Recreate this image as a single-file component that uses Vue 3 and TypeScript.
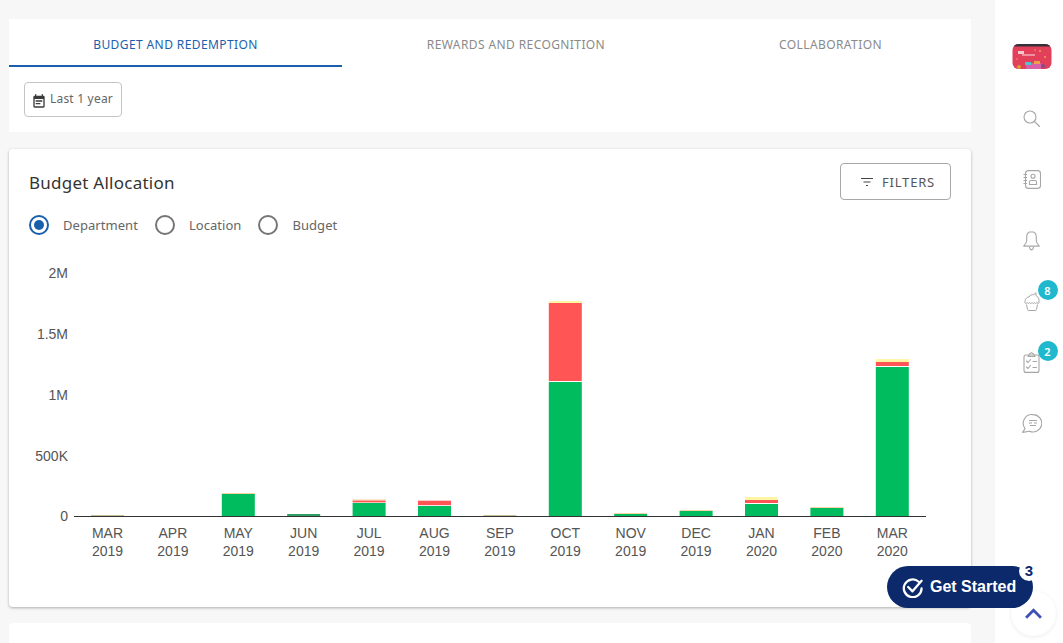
<script setup lang="ts">
type Segment = { color: string; height: number };
type Month = { label: string; year: string; segments: Segment[] };

const green = "#00bc5e";
const red = "#ff5555";
const yellow = "#fdf6a5";
const peach = "#f6d3a3";
const baseline = 266;

const months: Month[] = [
  { label: "MAR", year: "2019", segments: [{ color: "#c9bd94", height: 1 }] },
  { label: "APR", year: "2019", segments: [] },
  { label: "MAY", year: "2019", segments: [{ color: green, height: 22 }, { color: peach, height: 1 }] },
  { label: "JUN", year: "2019", segments: [{ color: "#2f9e63", height: 2 }] },
  { label: "JUL", year: "2019", segments: [{ color: green, height: 13 }, { color: "#ffffff", height: 0.6 }, { color: red, height: 2 }, { color: peach, height: 1 }] },
  { label: "AUG", year: "2019", segments: [{ color: green, height: 10 }, { color: "#ffffff", height: 0.8 }, { color: red, height: 4.5 }] },
  { label: "SEP", year: "2019", segments: [{ color: "#c9bd94", height: 1 }] },
  { label: "OCT", year: "2019", segments: [{ color: green, height: 134 }, { color: "#ffffff", height: 1 }, { color: red, height: 78 }, { color: yellow, height: 2 }] },
  { label: "NOV", year: "2019", segments: [{ color: green, height: 2 }, { color: peach, height: 1 }] },
  { label: "DEC", year: "2019", segments: [{ color: green, height: 5 }, { color: peach, height: 1 }] },
  { label: "JAN", year: "2020", segments: [{ color: green, height: 12 }, { color: "#ffffff", height: 1 }, { color: red, height: 3 }, { color: yellow, height: 3 }] },
  { label: "FEB", year: "2020", segments: [{ color: green, height: 8 }, { color: peach, height: 1 }] },
  { label: "MAR", year: "2020", segments: [{ color: green, height: 149 }, { color: "#ffffff", height: 1 }, { color: red, height: 4 }, { color: yellow, height: 3 }] }
];

const ticks = [
  { label: "2M", y: 23 },
  { label: "1.5M", y: 84 },
  { label: "1M", y: 145 },
  { label: "500K", y: 206 },
  { label: "0", y: 266 }
];

const tabs = ["BUDGET AND REDEMPTION", "REWARDS AND RECOGNITION", "COLLABORATION"];
const radios = ["Department", "Location", "Budget"];

function centerX(index: number): number {
  return 98.5 + index * 65.4;
}

function stack(month: Month) {
  let y = baseline;
  return month.segments.map((segment) => {
    y -= segment.height;
    return { ...segment, y };
  });
}
</script>

<template>
  <div class="page">
    <main class="content">
      <section class="tabCard">
        <div class="tabs">
          <div v-for="(tab, index) in tabs" :key="tab" class="tab" :class="{ active: index === 0 }">{{ tab }}</div>
        </div>
        <div class="rangeRow">
          <button class="rangeBtn">
            <svg class="rangeIcon" viewBox="0 0 18 20" width="12" height="14" aria-hidden="true">
              <path
                fill="#3a3a3a"
                d="M15.500 2H15V0h-2v2H5V0H3v2h-.5A2 2 0 0 0 .5 4v14a2 2 0 0 0 2 2h13a2 2 0 0 0 2-2V4a2 2 0 0 0-2-2zm0 16h-13V7h13v11zM4 9h10v2H4V9zm0 4h7v2H4v-2z"
              />
            </svg>
            <span>Last 1 year</span>
          </button>
        </div>
      </section>

      <section class="chartCard">
        <div class="chartHead">
          <h2 class="chartTitle">Budget Allocation</h2>
          <button class="filterBtn">
            <svg viewBox="0 0 12 8" width="12" height="8" aria-hidden="true">
              <path d="M0 .5h12M2.500 4h7M5 7.500h2" stroke="#444" fill="none" />
            </svg>
            <span>FILTERS</span>
          </button>
        </div>
        <div class="radios">
          <label v-for="(radio, index) in radios" :key="radio" class="radio">
            <span class="radioMark" :class="{ checked: index === 0 }"></span>
            <span>{{ radio }}</span>
          </label>
        </div>
        <svg class="chart" viewBox="0 0 962 320" width="962" height="320" role="img">
          <text v-for="tick in ticks" :key="tick.label" class="tickY" x="59" :y="tick.y + 5" text-anchor="end">{{ tick.label }}</text>
          <g v-for="(month, index) in months" :key="`${month.label}-${month.year}`">
            <rect
              v-for="(segment, segIndex) in stack(month)"
              :key="segIndex"
              :x="centerX(index) - 16.5"
              :y="segment.y"
              width="33"
              :height="segment.height"
              :fill="segment.color"
            />
            <text class="tickX" :x="centerX(index)" y="288" text-anchor="middle">{{ month.label }}</text>
            <text class="tickX" :x="centerX(index)" y="306" text-anchor="middle">{{ month.year }}</text>
          </g>
          <line x1="65" x2="917" y1="266.5" y2="266.5" stroke="#333" stroke-width="1" />
        </svg>
      </section>

      <section class="nextCard"></section>
    </main>

    <aside class="sidebar">
      <div class="navItem logoItem">
        <svg viewBox="0 0 40 25" width="40" height="25" aria-hidden="true">
          <defs>
            <clipPath id="logoClip"><rect x="0.500" width="39" height="25" rx="6" /></clipPath>
            <filter id="logoBlur"><feGaussianBlur stdDeviation="0.5" /></filter>
          </defs>
          <g clip-path="url(#logoClip)">
            <rect width="40" height="25" fill="#e2405a" />
            <rect width="40" height="2.500" fill="#35303a" />
            <g filter="url(#logoBlur)">
              <rect x="6" y="7" width="6" height="3" fill="#f8c6cf" />
              <rect x="10" y="10" width="13" height="2" fill="#f0909f" />
              <rect x="14" y="19" width="15" height="6" fill="#d95fa8" />
              <rect x="13" y="18" width="6" height="3" fill="#4fc3c9" />
              <rect x="22" y="17" width="6" height="3" fill="#eda04a" />
              <circle cx="7" cy="23" r="2" fill="#d8a030" />
              <circle cx="31" cy="22" r="2" fill="#8a4a8a" />
              <circle cx="28" cy="7" r="1" fill="#f0a050" />
              <circle cx="33" cy="13" r="1" fill="#f0a050" />
              <circle cx="5" cy="15" r="0.800" fill="#f0a050" />
              <circle cx="23" cy="6" r="0.800" fill="#f0a050" />
            </g>
          </g>
        </svg>
      </div>
      <div class="navItem">
        <svg viewBox="0 0 17 17" width="17" height="17" fill="none" stroke="#a6a6a6" stroke-width="1.100" aria-hidden="true">
          <circle cx="7" cy="7" r="6" />
          <path d="M11.500 11.500l5 5" stroke-linecap="round" />
        </svg>
      </div>
      <div class="navItem">
        <svg viewBox="0 0 18 19" width="18" height="19" fill="none" stroke="#a6a6a6" stroke-width="1.100" aria-hidden="true">
          <rect x="2.500" y="0.600" width="15" height="17.800" rx="3" />
          <path d="M.5 4.500h3.500M.5 7.500h3.500M.5 10.500h3.500M.5 13.500h3.500" />
          <circle cx="10" cy="6.200" r="2" />
          <path d="M6.500 14.500v-2.500a1.500 1.500 0 0 1 1.500-1.500h4a1.500 1.500 0 0 1 1.500 1.500v2.500z" />
        </svg>
      </div>
      <div class="navItem">
        <svg viewBox="0 0 17 20" width="17" height="20" fill="none" stroke="#a6a6a6" stroke-width="1.100" stroke-linejoin="round" aria-hidden="true">
          <path d="M8.500.6c-3.200 0-4.800 2.500-4.800 5.400v3.500c0 2.500-1.200 3.900-3 5.600h15.600c-1.800-1.700-3-3.100-3-5.600V6c0-2.900-1.600-5.400-4.800-5.400z" />
          <path d="M6.500 16c.3 1.800 1 2.900 2 2.900s1.700-1.100 2-2.900" />
        </svg>
      </div>
      <div class="navItem cupcake">
        <svg viewBox="0 0 16 19" width="16" height="19" fill="none" stroke="#a6a6a6" stroke-width="1" stroke-linejoin="round" aria-hidden="true">
          <path d="M1.200 10.500C.4 7.500 2.500 5 5 5c.8-1.800 3-2.800 5-2.200l1.800-2.200.4 3.200c2.500 1 3.300 4 2.600 6.700" />
          <path d="M.6 10.500c1 1.300 1.800 1.300 2.500 0 .8 1.300 1.700 1.300 2.500 0 .7 1.300 1.700 1.300 2.400 0 .8 1.300 1.700 1.300 2.500 0 .7 1.300 1.700 1.300 2.400 0 .7 1.300 1.700 1.300 2.500 0" />
          <path d="M2.500 12.500l1 5a1.500 1.500 0 0 0 1.400 1h6.200a1.500 1.500 0 0 0 1.400-1l1-5" />
        </svg>
        <span class="badge">8</span>
      </div>
      <div class="navItem clipboard">
        <svg viewBox="0 0 17 21" width="17" height="21" fill="none" stroke="#a6a6a6" stroke-width="1.100" stroke-linejoin="round" aria-hidden="true">
          <rect x="1" y="3" width="15" height="17.400" rx="2" />
          <path d="M5 4.500l1.500-2.500 2-1.400 2 1.400 1.500 2.500z" />
          <path d="M3.500 9l1.500 1.500 2.500-3M3.500 15l1.500 1.500 2.500-3M10 9.500h3.500M10 15.500h3.500" stroke-linecap="round" />
        </svg>
        <span class="badge">2</span>
      </div>
      <div class="navItem">
        <svg viewBox="0 0 20 19" width="20" height="19" fill="none" stroke="#a6a6a6" stroke-width="1.100" stroke-linejoin="round" aria-hidden="true">
          <path d="M11 .6a8.700 8.700 0 1 1-3.600 16.600L.6 18.400l2.500-3.800A8.700 8.700 0 0 1 11 .6z" />
          <path d="M7 6.500h8M7 9h3M12 9h3M8 11.500h6" />
        </svg>
      </div>
    </aside>

    <button class="scrollTop" aria-label="Scroll to top">
      <svg viewBox="0 0 16 10" width="17" height="11" aria-hidden="true">
        <path d="M1 9L8 2l7 7" fill="none" stroke="#3f51b5" stroke-width="2.600" />
      </svg>
    </button>
    <button class="getStarted">
      <svg viewBox="0 0 22 22" width="21" height="21" fill="none" stroke="#fff" stroke-width="2.400" aria-hidden="true">
        <path d="M17.500 5a9.300 9.300 0 1 0 3 7" stroke-linecap="round" />
        <path d="M6.500 10.500l4.500 4.500 9.500-11" stroke-linecap="round" stroke-linejoin="round" />
      </svg>
      <span>Get Started</span>
      <span class="startedCount">3</span>
    </button>
  </div>
</template>

<style>
html,
body {
  margin: 0;
  overflow: hidden;
}
</style>

<style scoped>
.page {
  position: relative;
  display: flex;
  width: 1063px;
  height: 643px;
  overflow: hidden;
  background: #f7f7f7;
  font-family: "Noto Sans", "Liberation Sans", sans-serif;
}

.content {
  width: 962px;
  margin-left: 9px;
  padding-top: 19px;
  display: flex;
  flex-direction: column;
  flex-shrink: 0;
}

.tabCard {
  height: 113px;
  background: #fff;
  flex-shrink: 0;
}

.tabs {
  display: grid;
  grid-template-columns: 333px 348px 1fr;
  height: 48px;
}

.tab {
  display: flex;
  align-items: center;
  justify-content: center;
  padding-top: 4px;
  box-sizing: border-box;
  border-bottom: 2px solid transparent;
  font-size: 12px;
  letter-spacing: 0.4px;
  color: #8a8a8a;
}

.tab.active {
  color: #1a5fad;
  border-bottom-color: #1a5fad;
}

.rangeRow {
  padding: 15px 15px 0;
}

.rangeBtn {
  display: flex;
  align-items: center;
  gap: 5px;
  width: 98px;
  height: 35px;
  padding: 0 0 0 8px;
  box-sizing: border-box;
  border: 1px solid #c4c4c4;
  border-radius: 4px;
  background: #fff;
  color: #666;
  font: inherit;
  font-size: 12px;
  letter-spacing: 0.2px;
}

.rangeIcon {
  margin-top: 2px;
}

.rangeBtn span {
  margin-top: -2px;
}

.chartCard {
  height: 458px;
  margin-top: 17px;
  background: #fff;
  border-radius: 4px;
  box-shadow: 0 1px 3px rgba(0, 0, 0, 0.3);
  flex-shrink: 0;
}

.chartHead {
  display: flex;
  align-items: center;
  justify-content: space-between;
  padding: 14px 20px 0;
}

.chartTitle {
  margin: 2px 0 0;
  font-size: 17px;
  font-weight: 400;
  letter-spacing: 0.25px;
  color: #333;
}

.filterBtn {
  display: flex;
  align-items: center;
  justify-content: center;
  gap: 9px;
  width: 111px;
  height: 37px;
  padding-left: 11px;
  box-sizing: border-box;
  border: 1px solid #a8a8a8;
  border-radius: 4px;
  background: #fff;
  color: #555;
  font: inherit;
  font-size: 13px;
  letter-spacing: 0.8px;
}

.radios {
  display: flex;
  align-items: center;
  gap: 17px;
  padding: 15px 20px 0;
  font-size: 13px;
  letter-spacing: 0.05px;
  color: #666;
}

.radio {
  display: flex;
  align-items: center;
  gap: 14px;
}

.radioMark {
  position: relative;
  width: 20px;
  height: 20px;
  box-sizing: border-box;
  border: 2px solid #757575;
  border-radius: 50%;
}

.radioMark.checked {
  border-color: #1a5fad;
}

.radioMark.checked::after {
  content: "";
  position: absolute;
  inset: 3px;
  border-radius: 50%;
  background: #1a5fad;
}

.chart {
  display: block;
  margin-top: 15px;
}

.tickY,
.tickX {
  font-family: "Liberation Sans", Arial, sans-serif;
  font-size: 14px;
  fill: #555;
}

.nextCard {
  height: 60px;
  margin-top: 16px;
  background: #fff;
  border-radius: 4px;
  flex-shrink: 0;
}

.sidebar {
  width: 68px;
  margin-left: 24px;
  padding: 27px 0 0 5px;
  box-sizing: border-box;
  background: #fff;
  display: flex;
  flex-direction: column;
  align-items: center;
  flex-shrink: 0;
}

.navItem {
  position: relative;
  display: flex;
  align-items: center;
  justify-content: center;
  width: 40px;
  height: 61px;
}

.logoItem {
  margin-top: -1px;
  margin-bottom: 1px;
}

.badge {
  position: absolute;
  top: 10px;
  right: -6px;
  width: 20px;
  height: 20px;
  display: flex;
  align-items: center;
  justify-content: center;
  border-radius: 50%;
  background: #1fb8cd;
  color: #fff;
  font-size: 11px;
  font-weight: 600;
}

.cupcake .badge {
  top: 9px;
}

.clipboard .badge {
  top: 9px;
}

.scrollTop {
  position: absolute;
  left: 1011px;
  top: 591px;
  width: 45px;
  height: 45px;
  padding: 0 0 1px;
  border: 0;
  border-radius: 50%;
  background: #fff;
  box-shadow: 0 1px 4px rgba(0, 0, 0, 0.08);
  display: flex;
  align-items: center;
  justify-content: center;
}

.getStarted {
  position: absolute;
  left: 887px;
  top: 566px;
  width: 146px;
  height: 42px;
  padding: 0 0 0 15px;
  border: 0;
  border-radius: 21px;
  background: #0c2a6b;
  color: #fff;
  display: flex;
  align-items: center;
  gap: 7px;
  font-family: "Liberation Sans", Arial, sans-serif;
  font-size: 16px;
  font-weight: 700;
}

.startedCount {
  position: absolute;
  right: -6px;
  top: -5px;
  width: 20px;
  height: 20px;
  padding-bottom: 2px;
  box-sizing: border-box;
  display: flex;
  align-items: center;
  justify-content: center;
  border-radius: 50%;
  background: #fff;
  color: #0c2a6b;
  font-size: 15px;
}
</style>
